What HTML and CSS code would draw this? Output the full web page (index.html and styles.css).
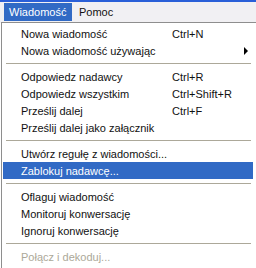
FILE: index.html
```html
<!DOCTYPE html>
<html lang="pl">
<head>
  <meta charset="UTF-8" />
  <title>Wiadomość</title>
  <link rel="stylesheet" href="styles.css">
</head>
<body>

<div class="menubar">
  <span class="top-item open">Wiadomość</span>
  <span class="top-item">Pomoc</span>
</div>

<div class="dropdown">
  <div class="item"><span class="label">Nowa wiadomość</span><span class="key">Ctrl+N</span></div>
  <div class="item"><span class="label">Nowa wiadomość używając</span><span class="key"></span><span class="arrow"></span></div>
  <div class="sep"></div>
  <div class="item"><span class="label">Odpowiedz nadawcy</span><span class="key">Ctrl+R</span></div>
  <div class="item"><span class="label">Odpowiedz wszystkim</span><span class="key">Ctrl+Shift+R</span></div>
  <div class="item"><span class="label">Prześlij dalej</span><span class="key">Ctrl+F</span></div>
  <div class="item"><span class="label">Prześlij dalej jako załącznik</span></div>
  <div class="sep"></div>
  <div class="item"><span class="label">Utwórz regułę z wiadomości...</span></div>
  <div class="item selected"><span class="label">Zablokuj nadawcę...</span></div>
  <div class="sep"></div>
  <div class="item"><span class="label">Oflaguj wiadomość</span></div>
  <div class="item"><span class="label">Monitoruj konwersację</span></div>
  <div class="item"><span class="label">Ignoruj konwersację</span></div>
  <div class="sep"></div>
  <div class="item disabled"><span class="label">Połącz i dekoduj...</span></div>
</div>

</body>
</html>
```

FILE: styles.css
```css
body {
  margin: 0;
  background: #ffffff;
  font-family: "Liberation Sans", Arial, sans-serif;
  font-size: 11px;
  color: #111;
  overflow: hidden;
}
.menubar {
  height: 20px;
  border-top: 2px solid #2a5fd8;
  background: #f1f0f3;
  display: flex;
  align-items: flex-start;
  padding: 1px 0 0 4px;
}
.top-item {
  display: block;
  flex-shrink: 0;
  height: 18px;
  line-height: 18px;
  padding: 0 0 0 5px;
}
.top-item.open {
  background: #316ac5;
  color: #fff;
  width: 63px;
  margin-right: 2px;
}
.dropdown {
  margin: -1px 0 0 1px;
  border: 1px solid #8e8e8e;
  border-right: none;
  padding: 2px 3px 3px 1px;
  background: #fff;
}
.item {
  display: flex;
  align-items: center;
  height: 17px;
  padding-left: 18px;
  white-space: nowrap;
}
.label {
  flex: 0 0 151px;
}
.key {
  flex: 1;
}
.arrow {
  width: 0;
  height: 0;
  border-top: 4px solid transparent;
  border-bottom: 4px solid transparent;
  border-left: 4px solid #000;
  margin-right: 5px;
}
.item.selected {
  background: #316ac5;
  color: #fff;
}
.item.disabled {
  color: #aca899;
}
.sep {
  height: 1px;
  background: #aca899;
  margin: 4px 2px 4px 3px;
}
```
